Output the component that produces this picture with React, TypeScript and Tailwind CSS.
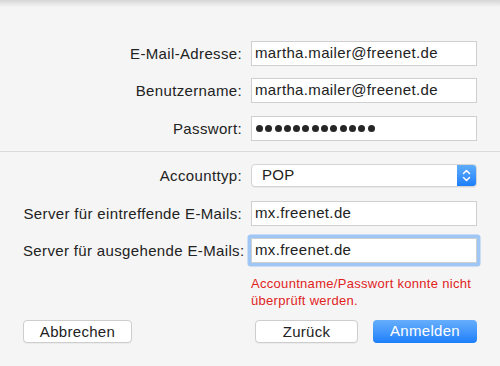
import React from "react";

const font = { fontFamily: '"Liberation Sans", Arial, sans-serif' };

function Label({ children }: { children: React.ReactNode }) {
  return (
    <div className="text-right whitespace-nowrap text-[15px] tracking-[0.35px] text-[#222] leading-none pr-[1px]">
      {children}
    </div>
  );
}

function Field({ value, focus }: { value: string; focus?: boolean }) {
  return (
    <div
      className={
        "h-[25px] bg-white border border-[#cfcfcf] flex items-center pl-[3px] text-[15px] tracking-[0.35px] text-[#222] " +
        (focus ? "shadow-[0_0_0_3.5px_#9fc6f5] rounded-[1px]" : "")
      }
    >
      {value}
    </div>
  );
}

function Row({ label, children, className }: { label: string; children: React.ReactNode; className?: string }) {
  return (
    <div className={"grid grid-cols-[220px_226px] gap-x-[8px] items-center " + (className ?? "")}>
      <Label>{label}</Label>
      {children}
    </div>
  );
}

export default function App() {
  return (
    <div className="w-[500px] h-[366px] bg-[#f5f5f5] relative overflow-hidden" style={font}>
      <div className="absolute top-0 left-0 right-0 h-[7px] bg-gradient-to-b from-[#d6d6d6] to-transparent" />
      <div className="px-[23px] pt-[41px]">
        <Row label="E-Mail-Adresse:">
          <Field value="martha.mailer@freenet.de" />
        </Row>
        <Row label="Benutzername:" className="mt-[12px]">
          <Field value="martha.mailer@freenet.de" />
        </Row>
        <Row label="Passwort:" className="mt-[13px]">
          <div className="h-[25px] bg-white border border-[#cfcfcf] flex items-center pl-[4px] gap-[2.3px]">
            {Array.from({ length: 13 }).map((_, i) => (
              <span key={i} className="w-[7px] h-[7px] rounded-full bg-[#262626]" />
            ))}
          </div>
        </Row>
      </div>
      <div className="mt-[10px] h-px bg-[#dadada]" />
      <div className="px-[23px] pt-[12px]">
        <Row label="Accounttyp:">
          <div className="h-[23px] bg-white border border-[#d4d4d4] rounded-[4px] flex items-stretch overflow-hidden shadow-[0_1px_0_rgba(0,0,0,0.05)]">
            <div className="flex-1 flex items-center pl-[10px] text-[15px] tracking-[0.35px] text-[#222]">POP</div>
            <div className="w-[19px] bg-gradient-to-b from-[#5eacfb] to-[#1a7ffb] flex items-center justify-center">
              <svg width="11" height="15" viewBox="0 0 11 15" fill="none">
                <path d="M2.5 5.5 L5.5 2.5 L8.5 5.5" stroke="white" strokeWidth="1.5" strokeLinecap="round" strokeLinejoin="round" />
                <path d="M2.5 9.5 L5.5 12.5 L8.5 9.5" stroke="white" strokeWidth="1.5" strokeLinecap="round" strokeLinejoin="round" />
              </svg>
            </div>
          </div>
        </Row>
        <Row label="Server für eintreffende E-Mails:" className="mt-[14px]">
          <Field value="mx.freenet.de" />
        </Row>
        <Row label="Server für ausgehende E-Mails:" className="mt-[12px]">
          <Field value="mx.freenet.de" focus />
        </Row>
        <div className="grid grid-cols-[220px_226px] gap-x-[8px] mt-[12px]">
          <div />
          <div className="text-[13px] tracking-[0.3px] leading-[17px] text-[#e0241d]">
            Accountname/Passwort konnte nicht
            <br />
            überprüft werden.
          </div>
        </div>
        <div className="flex items-center mt-[11px]">
          <button className="w-[109px] h-[23px] bg-white border border-[#cdcdcd] rounded-[4px] text-[15px] tracking-[0.3px] text-[#222] shadow-[0_1px_0_rgba(0,0,0,0.04)]">
            Abbrechen
          </button>
          <div className="flex-1" />
          <button className="w-[103px] h-[23px] bg-white border border-[#cdcdcd] rounded-[4px] text-[15px] tracking-[0.3px] text-[#222] shadow-[0_1px_0_rgba(0,0,0,0.04)]">
            Zurück
          </button>
          <button className="ml-[15px] w-[104px] h-[23px] rounded-[4px] bg-gradient-to-b from-[#66aefc] to-[#1a7efb] text-[15px] tracking-[0.3px] text-white">
            Anmelden
          </button>
        </div>
      </div>
    </div>
  );
}
